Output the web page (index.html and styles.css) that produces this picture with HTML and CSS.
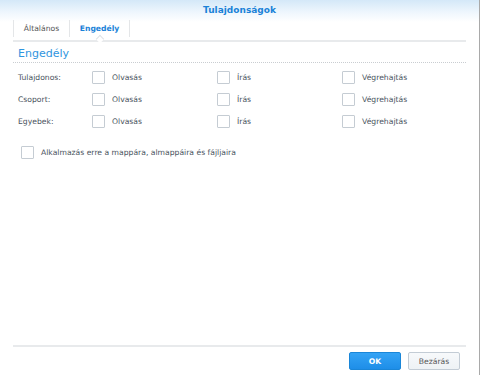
FILE: index.html
```html
<!DOCTYPE html>
<html lang="hu">
<head>
    <meta charset="UTF-8">
    <meta name="viewport" content="width=device-width, initial-scale=1.0">
    <title>Tulajdonságok</title>
    <link rel="stylesheet" href="styles.css">
</head>
<body>

    <div class="window">
        <div class="titlebar">Tulajdonságok</div>

        <div class="tabs">
            <div class="tab">Általános</div>
            <div class="tab active">Engedély</div>
        </div>

        <div class="content">
            <div class="section-title">Engedély</div>

            <div class="perm-grid">
                <div class="perm-label">Tulajdonos:</div>
                <label class="check"><span class="box"></span>Olvasás</label>
                <label class="check"><span class="box"></span>Írás</label>
                <label class="check"><span class="box"></span>Végrehajtás</label>

                <div class="perm-label">Csoport:</div>
                <label class="check"><span class="box"></span>Olvasás</label>
                <label class="check"><span class="box"></span>Írás</label>
                <label class="check"><span class="box"></span>Végrehajtás</label>

                <div class="perm-label">Egyebek:</div>
                <label class="check"><span class="box"></span>Olvasás</label>
                <label class="check"><span class="box"></span>Írás</label>
                <label class="check"><span class="box"></span>Végrehajtás</label>
            </div>

            <label class="check apply"><span class="box"></span>Alkalmazás erre a mappára, almappáira és fájljaira</label>
        </div>

        <div class="footer">
            <button class="btn btn-primary">OK</button>
            <button class="btn">Bezárás</button>
        </div>
    </div>

</body>
</html>
```

FILE: styles.css
```css
body {
    margin: 0;
    padding: 0;
    font-family: "DejaVu Sans", Verdana, sans-serif;
    font-size: 7.65px;
    color: #4a545e;
    background-color: #fff;
}

.window {
    width: 480px;
    height: 375px;
    box-sizing: border-box;
    border-right: 1px solid #a9a9a9;
    display: flex;
    flex-direction: column;
    background: linear-gradient(#d4e8f8 0, #eef6fd 12px, #fff 22px);
    overflow: hidden;
}

/* barre de titre */
.titlebar {
    height: 20px;
    line-height: 20px;
    text-align: center;
    font-weight: bold;
    font-size: 9px;
    color: #1a82d8;
}

/* onglets */
.tabs {
    display: flex;
    margin: 0 13px;
    height: 20px;
    border-bottom: 2px solid #e8eaec;
}

.tab {
    position: relative;
    width: 55px;
    height: 17px;
    line-height: 17px;
    text-align: center;
    border-right: 1px solid #e4e6e8;
    color: #555;
}

.tab:first-child {
    border-left: 1px solid #e4e6e8;
}

.tab.active {
    width: 59px;
    color: #1a82d8;
    font-weight: bold;
}

.tab.active::after {
    content: "";
    position: absolute;
    left: 50%;
    bottom: -5px;
    width: 5px;
    height: 5px;
    margin-left: -3px;
    background-color: #fff;
    border-left: 1px solid #dfe2e5;
    border-top: 1px solid #dfe2e5;
    transform: rotate(45deg);
}

.content {
    flex: 1;
    margin: 0 13px;
}

.section-title {
    margin-top: 5px;
    padding: 0 5px 1px;
    font-size: 11px;
    line-height: 14px;
    color: #2f95e0;
    border-bottom: 1px dotted #c9cdd1;
}

/* grille des droits */
.perm-grid {
    display: grid;
    grid-template-columns: 74px 125px 125px 125px;
    grid-auto-rows: 22px;
    margin-top: 3px;
    padding-left: 5px;
    align-items: center;
}

.check {
    display: flex;
    align-items: center;
    color: #4a545e;
}

.box {
    width: 11px;
    height: 11px;
    border: 1px solid #c5ccd3;
    border-radius: 1px;
    background-color: #fff;
    margin-right: 7px;
    flex-shrink: 0;
}

.apply {
    margin-top: 14px;
    padding-left: 8px;
}

/* pied */
.footer {
    margin: 0 13px;
    border-top: 2px solid #e8eaec;
    padding: 5px 6px 5px 0;
    display: flex;
    justify-content: flex-end;
    gap: 7px;
}

.btn {
    width: 52px;
    height: 18px;
    padding: 0;
    font-family: "DejaVu Sans", Verdana, sans-serif;
    font-size: 7.65px;
    border: 1px solid #c3ccd5;
    border-radius: 2px;
    background: linear-gradient(#f7f9fb, #eef2f5);
    color: #555;
}

.btn-primary {
    border-color: #1a86d8;
    background: linear-gradient(#34a3f5, #1e8ee8);
    color: #fff;
    font-weight: bold;
}
```
